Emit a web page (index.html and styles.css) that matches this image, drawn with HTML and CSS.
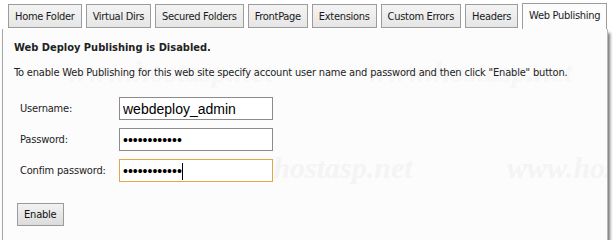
FILE: index.html
```html
<!DOCTYPE html>
<html lang="en">
<head>
    <meta charset="UTF-8">
    <title>Web Publishing</title>
    <link rel="stylesheet" href="styles.css">
</head>
<body>
    <div class="window">
        <ul class="tabs">
            <li class="tab">Home Folder</li>
            <li class="tab">Virtual Dirs</li>
            <li class="tab">Secured Folders</li>
            <li class="tab">FrontPage</li>
            <li class="tab">Extensions</li>
            <li class="tab">Custom Errors</li>
            <li class="tab">Headers</li>
            <li class="tab active">Web Publishing</li>
        </ul>
        <section class="panel">
            <span class="mark mark-1">www.hostasp.net</span>
            <span class="mark mark-2">www.hostasp.net</span>
            <span class="mark mark-3">www.hostasp.net</span>
            <span class="mark mark-4">www.hostasp.net</span>
            <h2>Web Deploy Publishing is Disabled.</h2>
            <p class="intro">To enable Web Publishing for this web site specify account user name and password and then click "Enable" button.</p>
            <div class="form">
                <div class="row">
                    <label for="username">Username:</label>
                    <input type="text" id="username" value="webdeploy_admin">
                </div>
                <div class="row">
                    <label for="password">Password:</label>
                    <input type="password" id="password" value="************">
                </div>
                <div class="row">
                    <label for="confirm">Confim password:</label>
                    <input type="password" id="confirm" class="focused" value="************"><span class="caret"></span>
                </div>
            </div>
            <button class="enable">Enable</button>
        </section>
    </div>
</body>
</html>
```

FILE: styles.css
```css
body, html {
    margin: 0;
    padding: 0;
    background-color: #fff;
    font-family: 'DejaVu Sans Condensed', 'Liberation Sans', sans-serif;
    font-size: 11px;
    letter-spacing: -0.18px;
    color: #222;
}
.window {
    margin-left: 2px;
    width: 606px;
}
.tabs {
    display: flex;
    gap: 4px;
    margin: 0;
    padding: 4px 0 0 6px;
    list-style: none;
}
.tab {
    height: 22px;
    line-height: 23px;
    padding: 0 6px;
    border: 1px solid #9c9c9c;
    background: linear-gradient(#f4f4f4, #e6e6e6);
    color: #1a1a1a;
    letter-spacing: -0.3px;
    white-space: nowrap;
}
.tab.active {
    height: 25px;
    margin-top: -1px;
    background: #fcfcfc;
    border-bottom: none;
    position: relative;
    z-index: 1;
}
.panel {
    position: relative;
    height: 211px;
    border-left: 1px solid #a8a8a8;
    border-right: 1px solid #b8b8b8;
    background-color: #fcfcfc;
    padding: 0 0 0 11px;
    box-shadow: 2px 4px 3px rgba(0, 0, 0, 0.55);
    overflow: hidden;
}
.panel h2 {
    position: relative;
    margin: 0;
    padding-top: 12px;
    font-size: 11px;
    font-weight: bold;
    letter-spacing: 0;
    color: #222;
}
.intro {
    position: relative;
    margin: 12px 0 0;
}
.form {
    position: relative;
    display: flex;
    flex-direction: column;
    gap: 8px;
    margin-top: 18px;
    padding-left: 6px;
}
.row {
    display: flex;
    align-items: center;
}
.row label {
    width: 99px;
    color: #222;
}
.row input {
    width: 146px;
    height: 17px;
    padding: 2px 3px;
    border: 1px solid #8c8c8c;
    background-color: #fff;
    font-family: 'Liberation Sans', Arial, sans-serif;
    font-size: 14px;
    letter-spacing: 0;
    color: #000;
    outline: none;
}
.row input.focused {
    border-color: #e3a74a;
}
.caret {
    position: absolute;
    left: 168px;
    width: 1px;
    height: 17px;
    margin-top: 1px;
    background-color: #000;
}
.enable {
    position: relative;
    margin: 21px 0 0 3px;
    height: 23px;
    padding: 0 6px;
    border: 1px solid #9a9a9a;
    background: linear-gradient(#f2f2f2, #dcdcdc);
    font-family: 'DejaVu Sans Condensed', 'Liberation Sans', sans-serif;
    font-size: 11px;
    letter-spacing: -0.2px;
    color: #111;
}
.mark {
    position: absolute;
    font-family: 'Liberation Serif', serif;
    font-style: italic;
    font-weight: bold;
    font-size: 30px;
    letter-spacing: 0;
    color: #f4f4f4;
    white-space: nowrap;
    pointer-events: none;
}
.mark-1 {
    left: 64px;
    top: 26px;
    color: #f7f7f7;
}
.mark-2 {
    left: 364px;
    top: 26px;
    color: #f7f7f7;
}
.mark-3 {
    left: 204px;
    top: 122px;
}
.mark-4 {
    left: 504px;
    top: 122px;
}
```
